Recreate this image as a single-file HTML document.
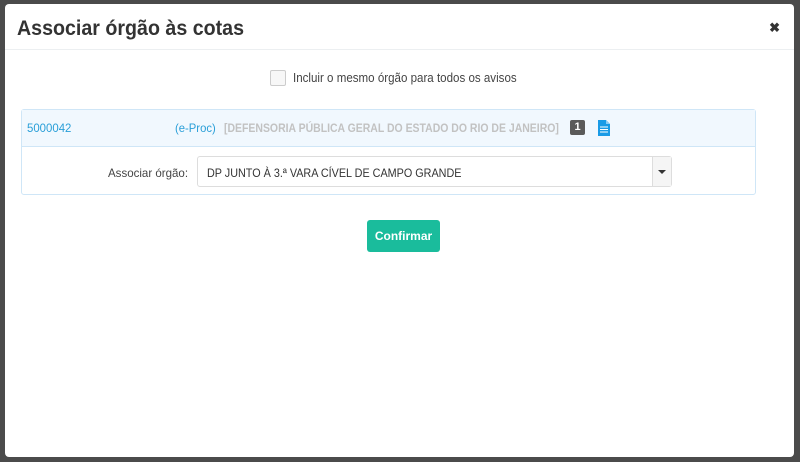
<!DOCTYPE html>
<html><head><meta charset="utf-8"><style>
body{margin:0;width:800px;height:462px;background:#4b4b4b;font-family:"Liberation Sans",sans-serif;overflow:hidden;position:relative}
.m{position:absolute;left:5px;top:4px;width:789px;height:453px;background:#fff;border-radius:4px}
.h{height:45px;border-bottom:1px solid #eceff1;position:relative}
.h h1{margin:0;position:absolute;left:12px;top:13px;font-size:21px;font-weight:bold;color:#333;transform:scaleX(0.935);transform-origin:left}
.x{position:absolute;right:14px;top:16px;font-size:13px;font-weight:bold;color:#333}
.cb{position:absolute;left:265px;top:66px;width:14px;height:14px;border:1px solid #ccc;border-radius:2px;background:#f7f7f7}
.cbl{position:absolute;left:288px;top:67px;font-size:12.5px;color:#444;transform:scaleX(0.925);transform-origin:left}
.p{position:absolute;left:16px;top:105px;width:733px;height:84px;border:1px solid #cfe6f7;border-radius:3px}
.ph{height:36px;background:#f1f8fe;border-bottom:1px solid #cfe6f7;position:relative;font-size:12px}
.t{position:absolute;top:11px;transform-origin:left;white-space:nowrap}
.sel{position:absolute;left:175px;top:46px;width:473px;height:29px;border:1px solid #ddd;border-radius:3px;font-size:12px;color:#333}
.btn{position:absolute;left:362px;top:216px;width:73px;height:32px;background:#1abc9c;border-radius:3px;color:#fff;font-size:12px;font-weight:bold;text-align:center;line-height:32px}
</style></head><body>
<div class="m">
<div class="h"><h1>Associar órgão às cotas</h1><span class="x">✖</span></div>
<div class="cb"></div><div class="cbl">Incluir o mesmo órgão para todos os avisos</div>
<div class="p">
<div class="ph">
<span class="t" style="left:5px;color:#2a9fd8;transform:scaleX(0.95)">5000042</span>
<span class="t" style="left:153px;color:#2a9fd8;transform:scaleX(0.94)">(e-Proc)</span>
<span class="t" style="left:202px;color:#c2c2c2;font-weight:bold;transform:scaleX(0.872)">[DEFENSORIA PÚBLICA GERAL DO ESTADO DO RIO DE JANEIRO]</span>
<span style="position:absolute;left:548px;top:10px;width:15px;height:15px;background:#5a5a5a;border-radius:2px;color:#fff;font-size:11px;font-weight:bold;text-align:center;line-height:15px">1</span>
<svg style="position:absolute;left:576px;top:10px" width="12" height="16" viewBox="0 0 12 16"><path d="M0 0H8L12 4V16H0Z" fill="#1a9be6"/><path d="M8 0V4H12" fill="#8ccbf2"/><path d="M2 7H10M2 9.5H10M2 12H10" stroke="#fff" stroke-width="1"/></svg>
</div>
<span style="position:absolute;left:86px;top:56px;font-size:12px;color:#444;transform:scaleX(0.96);transform-origin:left">Associar órgão:</span>
<div class="sel"><span style="position:absolute;left:9px;top:9px;transform:scaleX(0.9);transform-origin:left;white-space:nowrap">DP JUNTO À 3.ª VARA CÍVEL DE CAMPO GRANDE</span>
<div style="position:absolute;right:0;top:0;width:18px;height:29px;border-left:1px solid #ddd;background:#f5f5f5"><div style="position:absolute;left:5px;top:13px;border:4px solid transparent;border-top-color:#333;border-bottom:0"></div></div></div>
</div>
<div class="btn">Confirmar</div>
</div>
</body></html>
